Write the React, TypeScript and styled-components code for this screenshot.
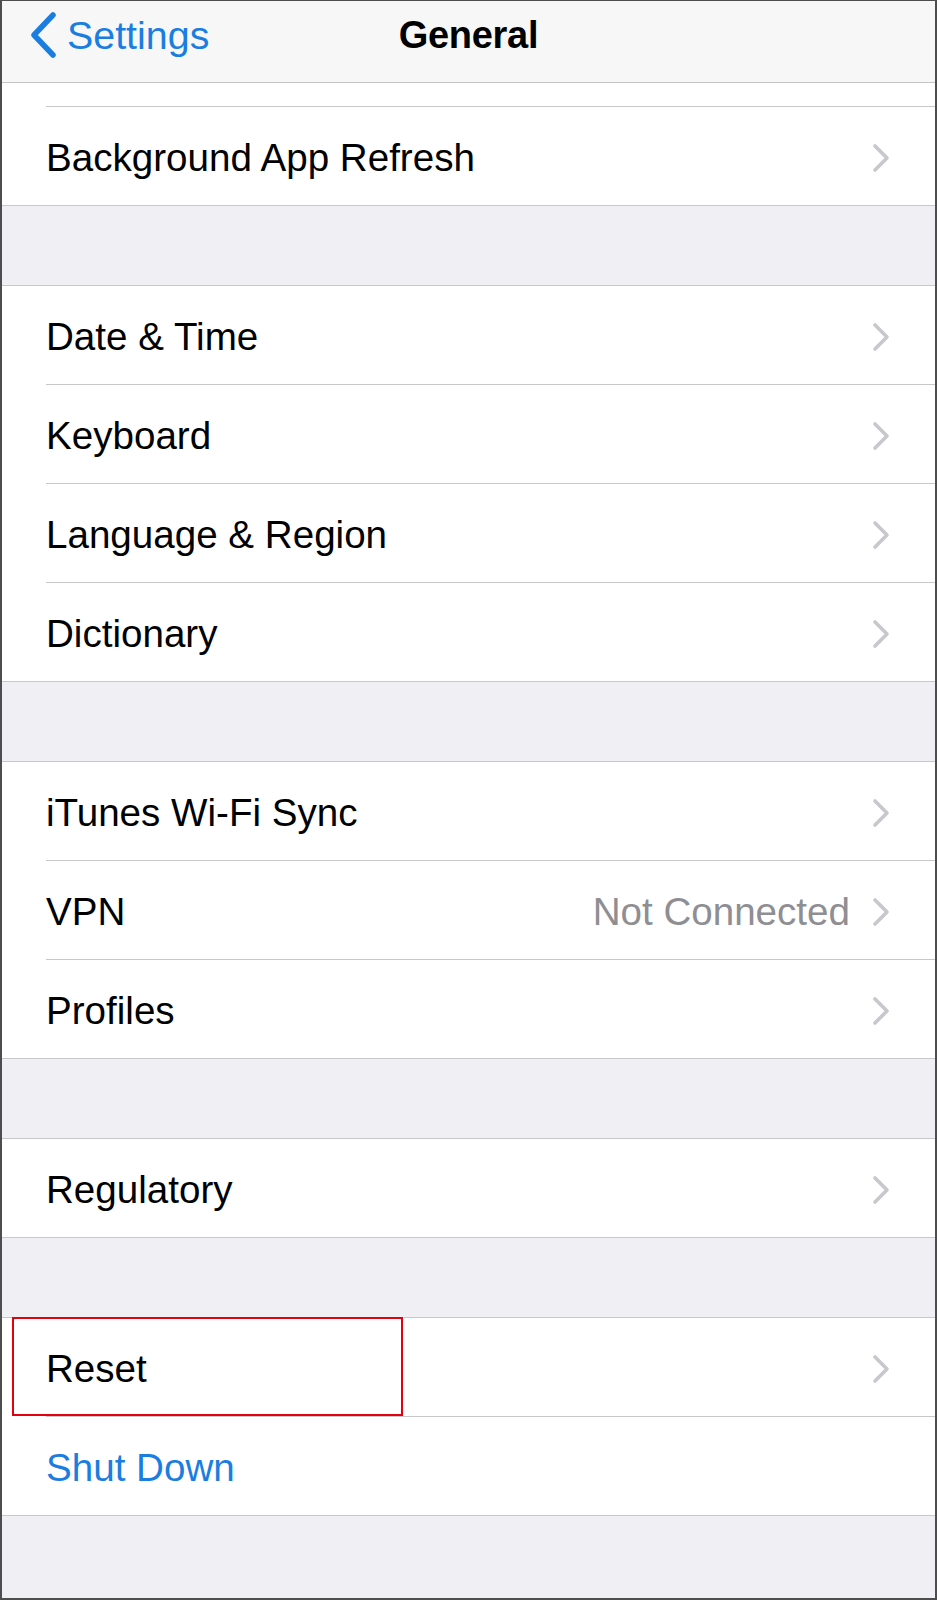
import React from 'react'
import styled, { createGlobalStyle } from 'styled-components'

const GlobalStyle = createGlobalStyle`
  html, body {
    margin: 0;
    padding: 0;
    background: #ffffff;
  }
  * {
    box-sizing: border-box;
  }
`

const Screen = styled.div`
  width: 937px;
  height: 1600px;
  overflow: hidden;
  display: flex;
  flex-direction: column;
  background: #efeff4;
  border: 2px solid #4d4d4d;
  border-top-width: 1px;
  font-family: 'Liberation Sans', Arial, sans-serif;
  font-size: 38.6px;
  color: #000;
`

const NavBar = styled.header`
  height: 82px;
  flex-shrink: 0;
  display: grid;
  grid-template-columns: 1fr auto 1fr;
  align-items: start;
  padding-top: 11px;
  background: #f7f7f7;
  border-bottom: 1px solid #c4c4c4;
`

const BackButton = styled.div`
  display: flex;
  align-items: center;
  gap: 10px;
  padding-left: 27px;
  height: 46px;
  color: #1a7ee0;
  font-size: 39.4px;
  line-height: 46px;
`

const Title = styled.h1`
  margin: 0;
  font-size: 38px;
  font-weight: 700;
  line-height: 46px;
  letter-spacing: -0.3px;
`

const Group = styled.section<{ $top?: boolean }>`
  background: #ffffff;
  border-bottom: 1px solid #c8c7cc;
  border-top: ${(p) => (p.$top ? 'none' : '1px solid #c8c7cc')};
  margin-top: ${(p) => (p.$top ? '0' : '79px')};
  flex-shrink: 0;
`

const Row = styled.div`
  position: relative;
  display: flex;
  padding-left: 44px;

  &:last-child > div {
    border-bottom: none;
    height: 98px;
  }
`

const RowBody = styled.div<{ $short?: boolean }>`
  flex: 1;
  display: flex;
  align-items: center;
  height: ${(p) => (p.$short ? '24px' : '99px')};
  padding: ${(p) => (p.$short ? '0 44px 0 0' : '3px 44px 0 0')};
  border-bottom: 1px solid #c8c7cc;
`

const Label = styled.span<{ $action?: boolean }>`
  flex: 1;
  color: ${(p) => (p.$action ? '#1a7ee0' : '#000')};
  white-space: nowrap;
`

const Value = styled.span`
  color: #8e8e93;
  margin-right: 22px;
`

const Highlight = styled.div`
  position: absolute;
  left: 10px;
  top: -1px;
  width: 391px;
  height: 99px;
  border: 2.5px solid #e3000f;
  pointer-events: none;
`

const Chevron = () => (
  <svg width="19" height="30" viewBox="0 0 19 30">
    <polyline
      points="3,3 15,15 3,27"
      fill="none"
      stroke="#c7c7cc"
      strokeWidth="3.6"
      strokeLinecap="round"
      strokeLinejoin="round"
    />
  </svg>
)

const BackChevron = () => (
  <svg width="28" height="46" viewBox="0 0 28 46">
    <polyline
      points="24,3 5,23 24,43"
      fill="none"
      stroke="#1a7ee0"
      strokeWidth="5.5"
      strokeLinecap="round"
      strokeLinejoin="round"
    />
  </svg>
)

type Item = {
  label: string
  value?: string
  action?: boolean
  highlight?: boolean
}

const groups: Item[][] = [
  [{ label: 'Date & Time' }, { label: 'Keyboard' }, { label: 'Language & Region' }, { label: 'Dictionary' }],
  [{ label: 'iTunes Wi-Fi Sync' }, { label: 'VPN', value: 'Not Connected' }, { label: 'Profiles' }],
  [{ label: 'Regulatory' }],
  [{ label: 'Reset', highlight: true }, { label: 'Shut Down', action: true }],
]

const SettingsRow: React.FC<{ item: Item }> = ({ item }) => (
  <Row>
    {item.highlight && <Highlight />}
    <RowBody>
      <Label $action={item.action}>{item.label}</Label>
      {item.value && <Value>{item.value}</Value>}
      {!item.action && <Chevron />}
    </RowBody>
  </Row>
)

const App: React.FC = () => {
  return (
    <>
      <GlobalStyle />
      <Screen>
        <NavBar>
          <BackButton>
            <BackChevron />
            <span>Settings</span>
          </BackButton>
          <Title>General</Title>
          <div />
        </NavBar>

        <Group $top>
          <Row>
            <RowBody $short />
          </Row>
          <SettingsRow item={{ label: 'Background App Refresh' }} />
        </Group>

        {groups.map((group, i) => (
          <Group key={i}>
            {group.map((item) => (
              <SettingsRow key={item.label} item={item} />
            ))}
          </Group>
        ))}
      </Screen>
    </>
  )
}

export default App
